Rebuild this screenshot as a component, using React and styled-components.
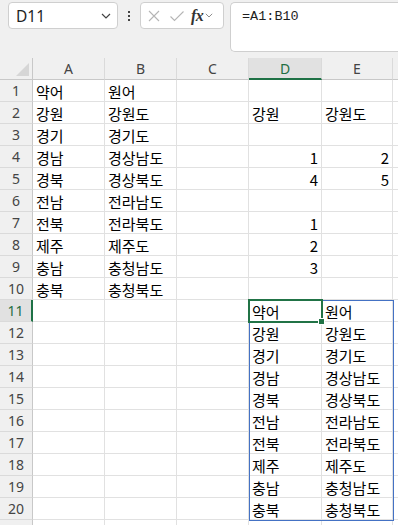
import React from "react";
import styled, { createGlobalStyle, css } from "styled-components";

const Global = createGlobalStyle`
  html, body { margin: 0; padding: 0; }
  body { background: #f0f0f0; overflow: hidden; width: 398px; height: 525px; }
  * { box-sizing: border-box; }
`;

const Page = styled.div`
  width: 398px;
  height: 525px;
  overflow: hidden;
  background: #f0f0f0;
`;

const Toolbar = styled.div`
  display: flex;
  align-items: flex-start;
  height: 58px;
  padding: 2px 0 0 8px;
`;

const Box = styled.div`
  height: 27px;
  background: #fff;
  border: 1px solid #cfcfcf;
  border-radius: 4px;
  display: flex;
  align-items: center;
`;

const NameBox = styled(Box)`
  width: 110px;
  justify-content: space-between;
  padding: 0 6px 0 7px;
  font-family: "Noto Sans", "Open Sans", sans-serif;
  font-size: 15.5px;
  color: #1f1f1f;
`;

const Dots = styled.div`
  width: 22px;
  height: 27px;
  display: flex;
  flex-direction: column;
  align-items: center;
  justify-content: center;
  gap: 2px;
  span {
    width: 2px;
    height: 2px;
    background: #444;
    display: block;
  }
`;

const FuncBox = styled(Box)`
  width: 84px;
  padding: 0 0 0 5px;
`;

const Fx = styled.span`
  font-family: "Liberation Serif", "DejaVu Serif", serif;
  font-style: italic;
  font-size: 16px;
  font-weight: 600;
  color: #333;
  margin: 0 2px 0 6px;
  letter-spacing: -0.5px;
`;

const FormulaBar = styled.div`
  flex: 1;
  margin-left: 6px;
  height: 50px;
  background: #fff;
  border: 1px solid #cfcfcf;
  border-right: none;
  border-radius: 5px 0 0 5px;
  padding: 6px 0 0 11px;
  font-family: "Liberation Mono", "DejaVu Sans Mono", monospace;
  font-size: 13.5px;
  color: #1f1f1f;
`;

const Sheet = styled.div`
  position: relative;
  display: grid;
  grid-template-columns: 33px 72px 72px 72px 73px 71px 72px;
  grid-auto-rows: 22px;
  background: #fff;
`;

const Corner = styled.div`
  background: #f0f0f0;
  border-right: 1px solid #c8c8c8;
  border-bottom: 1px solid #c8c8c8;
  display: flex;
  align-items: flex-end;
  justify-content: flex-end;
  padding: 0 3px 3px 0;
`;

const ColHeader = styled.div`
  background: #f0f0f0;
  border-right: 1px solid #dadada;
  border-bottom: 1px solid #c8c8c8;
  display: flex;
  align-items: center;
  justify-content: center;
  font-family: "Noto Sans", "Open Sans", sans-serif;
  font-size: 14px;
  color: #444;
  ${(p) =>
    p.$selected &&
    css`
      background: #e1e1e1;
      color: #1e6e42;
      border-bottom: 2px solid #1e7145;
    `}
`;

const RowHeader = styled.div`
  background: #f0f0f0;
  border-right: 1px solid #c8c8c8;
  border-bottom: 1px solid #dadada;
  display: flex;
  align-items: center;
  justify-content: center;
  font-family: "Noto Sans", "Open Sans", sans-serif;
  font-size: 14px;
  color: #444;
  ${(p) =>
    p.$selected &&
    css`
      background: #e1e1e1;
      color: #1e6e42;
      border-right: 2px solid #1e7145;
    `}
`;

const Cell = styled.div`
  border-right: 1px solid #e1e1e1;
  border-bottom: 1px solid #e1e1e1;
  display: flex;
  align-items: center;
  justify-content: ${(p) => (p.$num ? "flex-end" : "flex-start")};
  padding: 1px 3px 0 3px;
  font-family: "Noto Sans CJK KR", "Noto Sans", sans-serif;
  font-size: 15px;
  color: #000;
  white-space: nowrap;
  overflow: hidden;
`;

const SpillBorder = styled.div`
  position: absolute;
  left: 249px;
  top: 242px;
  width: 145px;
  height: 221px;
  border: 1px solid #4472c4;
  pointer-events: none;
`;

const Selection = styled.div`
  position: absolute;
  left: 248px;
  top: 241px;
  width: 75px;
  height: 24px;
  border: 2px solid #217346;
  pointer-events: none;
`;

const Handle = styled.div`
  position: absolute;
  left: 318px;
  top: 260px;
  width: 7px;
  height: 7px;
  background: #217346;
  border: 1px solid #fff;
`;

const Chevron = ({ color = "#555", size = 10 }) => (
  <svg width={size} height={size * 0.6} viewBox="0 0 10 6">
    <path d="M1 1 L5 5 L9 1" fill="none" stroke={color} strokeWidth="1.2" />
  </svg>
);

const Cross = () => (
  <svg width="14" height="14" viewBox="0 0 14 14" style={{ margin: "0 5px 0 1px" }}>
    <path d="M2 2 L12 12 M12 2 L2 12" stroke="#b5b5b5" strokeWidth="1.1" fill="none" />
  </svg>
);

const Check = () => (
  <svg width="16" height="14" viewBox="0 0 16 14" style={{ margin: "0 0 0 3px" }}>
    <path d="M1.5 7.5 L5.5 11.5 L14.5 2.5" stroke="#b5b5b5" strokeWidth="1.1" fill="none" />
  </svg>
);

const Triangle = () => (
  <svg width="13" height="13" viewBox="0 0 13 13">
    <path d="M13 0 L13 13 L0 13 Z" fill="#d6d6d6" />
  </svg>
);

const cols = ["A", "B", "C", "D", "E", "F"];

const data = {
  1: { A: "약어", B: "원어" },
  2: { A: "강원", B: "강원도", D: "강원", E: "강원도" },
  3: { A: "경기", B: "경기도" },
  4: { A: "경남", B: "경상남도", D: 1, E: 2 },
  5: { A: "경북", B: "경상북도", D: 4, E: 5 },
  6: { A: "전남", B: "전라남도" },
  7: { A: "전북", B: "전라북도", D: 1 },
  8: { A: "제주", B: "제주도", D: 2 },
  9: { A: "충남", B: "충청남도", D: 3 },
  10: { A: "충북", B: "충청북도" },
  11: { D: "약어", E: "원어" },
  12: { D: "강원", E: "강원도" },
  13: { D: "경기", E: "경기도" },
  14: { D: "경남", E: "경상남도" },
  15: { D: "경북", E: "경상북도" },
  16: { D: "전남", E: "전라남도" },
  17: { D: "전북", E: "전라북도" },
  18: { D: "제주", E: "제주도" },
  19: { D: "충남", E: "충청남도" },
  20: { D: "충북", E: "충청북도" },
};

export default function App() {
  const rows = Array.from({ length: 21 }, (_, i) => i + 1);
  return (
    <Page>
      <Global />
      <Toolbar>
        <NameBox>
          <span>D11</span>
          <Chevron color="#444" size={10} />
        </NameBox>
        <Dots>
          <span />
          <span />
          <span />
        </Dots>
        <FuncBox>
          <Cross />
          <Check />
          <Fx>fx</Fx>
          <Chevron color="#888" size={8} />
        </FuncBox>
        <FormulaBar>=A1:B10</FormulaBar>
      </Toolbar>
      <Sheet>
        <Corner>
          <Triangle />
        </Corner>
        {cols.map((c) => (
          <ColHeader key={c} $selected={c === "D"}>
            {c === "F" ? "" : c}
          </ColHeader>
        ))}
        {rows.map((r) => (
          <React.Fragment key={r}>
            <RowHeader $selected={r === 11}>{r <= 20 ? r : ""}</RowHeader>
            {cols.map((c) => {
              const v = data[r] ? data[r][c] : undefined;
              return (
                <Cell key={c} $num={typeof v === "number"}>
                  {v}
                </Cell>
              );
            })}
          </React.Fragment>
        ))}
        <SpillBorder />
        <Selection />
        <Handle />
      </Sheet>
    </Page>
  );
}
